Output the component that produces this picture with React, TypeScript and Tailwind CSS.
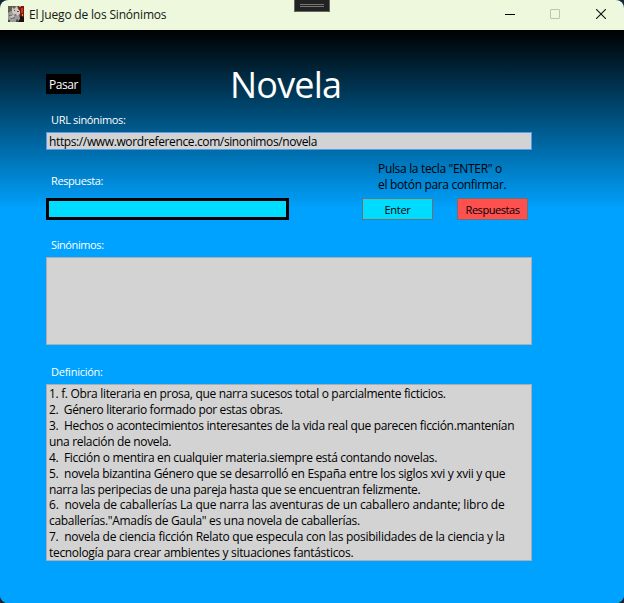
import React from "react";

const definitions: { text: string; cls: string }[] = [
  { text: "1. f. Obra literaria en prosa, que narra sucesos total o parcialmente ficticios.", cls: "tracking-[-0.325px]" },
  { text: "2.  Género literario formado por estas obras.", cls: "tracking-[-0.35px]" },
  { text: "3.  Hechos o acontecimientos interesantes de la vida real que parecen ficción.mantenían", cls: "tracking-[-0.32px]" },
  { text: "una relación de novela.", cls: "tracking-[-0.33px]" },
  { text: "4.  Ficción o mentira en cualquier materia.siempre está contando novelas.", cls: "tracking-[-0.325px]" },
  { text: "5.  novela bizantina Género que se desarrolló en España entre los siglos xvi y xvii y que", cls: "tracking-[-0.295px]" },
  { text: "narra las peripecias de una pareja hasta que se encuentran felizmente.", cls: "tracking-[-0.355px]" },
  { text: "6.  novela de caballerías La que narra las aventuras de un caballero andante; libro de", cls: "mt-[-1px] tracking-[-0.2px]" },
  { text: "caballerías.\"Amadís de Gaula\" es una novela de caballerías.", cls: "tracking-[-0.32px]" },
  { text: "7.  novela de ciencia ficción Relato que especula con las posibilidades de la ciencia y la", cls: "tracking-[-0.255px]" },
  { text: "tecnología para crear ambientes y situaciones fantásticos.", cls: "tracking-[-0.32px]" },
];

function AppIcon() {
  return (
    <svg width="16" height="16" viewBox="0 0 16 16" className="ml-2 mt-1.5 shrink-0">
      <rect width="16" height="16" fill="#6b675f" />
      <path d="M0 0h6v3H3v3H0z" fill="#5f6049" />
      <path d="M10 0h6v12h-4l-1-5z" fill="#7e1710" />
      <path d="M13 2h2v5h-2z" fill="#c43a17" />
      <path d="M11 0h2v1h-2zM14 8h1v2h-1z" fill="#c9a24a" />
      <path d="M0 7l3-2 4 1 4 3 1 4-3 3H2l-2-3z" fill="#9c9b9b" />
      <path d="M4 1l2 2 3-3 1 3 2 2v3l-3 2-3-1-2-3z" fill="#cbc9c6" />
      <path d="M6 4h1v1H6zM9 5h2v1H9z" fill="#8d3932" />
      <path d="M1 9h3v1H1zM3 12l4-1v1l-4 1zM7 8l2 1-1 1-2-1z" fill="#65635f" />
      <path d="M2 10l4-1v2l-3 1z" fill="#c3c2c0" />
      <path d="M12 10l4 1v5h-6l2-3z" fill="#1b100c" />
      <path d="M0 14h2v2H0zM8 14l2-1v3H8z" fill="#4b4a46" />
    </svg>
  );
}

function TitleBar() {
  return (
    <header className="relative flex h-[30px] shrink-0 rounded-t-lg bg-[#edf8dd] text-[#141712]">
      <AppIcon />
      <h1 className="ml-[5px] whitespace-nowrap text-xs leading-[30px] tracking-[-0.18px]">El Juego de los Sinónimos</h1>
      <div className="absolute left-[294px] top-0 flex h-3 w-9 flex-col items-center gap-px border border-t-0 border-[#666] bg-[#222] pt-1">
        <span className="h-px w-6 bg-[#777]" />
        <span className="h-px w-6 bg-[#777]" />
      </div>
      <div className="ml-auto mr-[18px] flex items-start gap-[35px] pt-[9px]">
        <svg width="10" height="10" viewBox="0 0 10 10" className="-ml-px mr-px"><path d="M0 5.5h10" stroke="#000" /></svg>
        <svg width="10" height="10" viewBox="0 0 10 10" className="-ml-px mr-px"><rect x=".5" y=".5" width="9" height="9" rx=".5" fill="none" stroke="#bcc6af" /></svg>
        <svg width="10" height="10" viewBox="0 0 10 10"><path d="M0 0l10 10M10 0L0 10" stroke="#111" strokeWidth="1.1" /></svg>
      </div>
    </header>
  );
}

export default function App() {
  return (
    <div className="h-[603px] w-[624px] bg-[#25232a] font-['Open_Sans','Noto_Sans',sans-serif] text-xs text-black">
      <div className="flex h-full flex-col overflow-hidden rounded-lg bg-[#00a2ff]">
        <TitleBar />
        <main className="flex-1 bg-[linear-gradient(to_bottom,#000_0px,#00a2ff_180px)] pl-[46px]">
          <div className="flex h-[82px] w-[486px] pt-[30px]">
            <button className="mt-3.5 h-5 w-[35px] bg-black text-xs leading-[22px] tracking-[-0.45px] text-white">Pasar</button>
            <h2 className="ml-[149px] text-[36px] leading-[49px] tracking-[-0.8px] text-white">Novela</h2>
          </div>
          <label className="block h-5 pl-[5px] text-[11px] leading-4 tracking-[-0.34px] text-white">URL sinónimos:</label>
          <div className="h-[18px] w-[486px] border border-[#569de5] bg-[#d3d3d3] pl-0.5 leading-[17px]">
            <span className="tracking-[-0.38px]">https://www.wordreference.com/sinonimos/novela</span>
          </div>
          <div className="flex h-[86px] w-[486px]">
            <div className="w-[243px] pt-[23px]">
              <label className="block h-[25px] pl-[5px] text-[11px] leading-4 tracking-[-0.4px] text-white">Respuesta:</label>
              <input aria-label="Respuesta" className="block h-[22px] w-[243px] border-[3px] border-black bg-[#00dcff] outline-none" />
            </div>
            <div className="ml-[73px] pt-[11px]">
              <p className="h-[37px] whitespace-nowrap pl-4 leading-4 tracking-[-0.33px]">
                Pulsa la tecla "ENTER" o<br />el botón para confirmar.
              </p>
              <div className="flex gap-6">
                <button className="h-[22px] w-[71px] border border-[#707070] bg-[#00dcff] text-[11px] leading-[22px] tracking-[-0.3px]">Enter</button>
                <button className="h-[22px] w-[71px] border border-[#707070] bg-[#ff5050] text-[11px] leading-[22px] tracking-[-0.45px]">Respuestas</button>
              </div>
            </div>
          </div>
          <label className="block h-[21px] pl-[5px] text-[11px] leading-[18px] tracking-[-0.4px] text-white">Sinónimos:</label>
          <div className="h-[88px] w-[486px] border border-[#abadb3] bg-[#d3d3d3]" />
          <label className="block h-[39px] pl-[5px] pt-[18px] text-[11px] leading-[18px] tracking-[-0.25px] text-white">Definición:</label>
          <div className="h-[177px] w-[486px] overflow-hidden border border-[#abadb3] bg-[#d3d3d3] pl-0.5 pt-px">
            {definitions.map((line) => (
              <p key={line.text} className={`h-4 whitespace-pre leading-4 ${line.cls}`}>
                <span>{line.text}</span>
              </p>
            ))}
          </div>
        </main>
      </div>
    </div>
  );
}
